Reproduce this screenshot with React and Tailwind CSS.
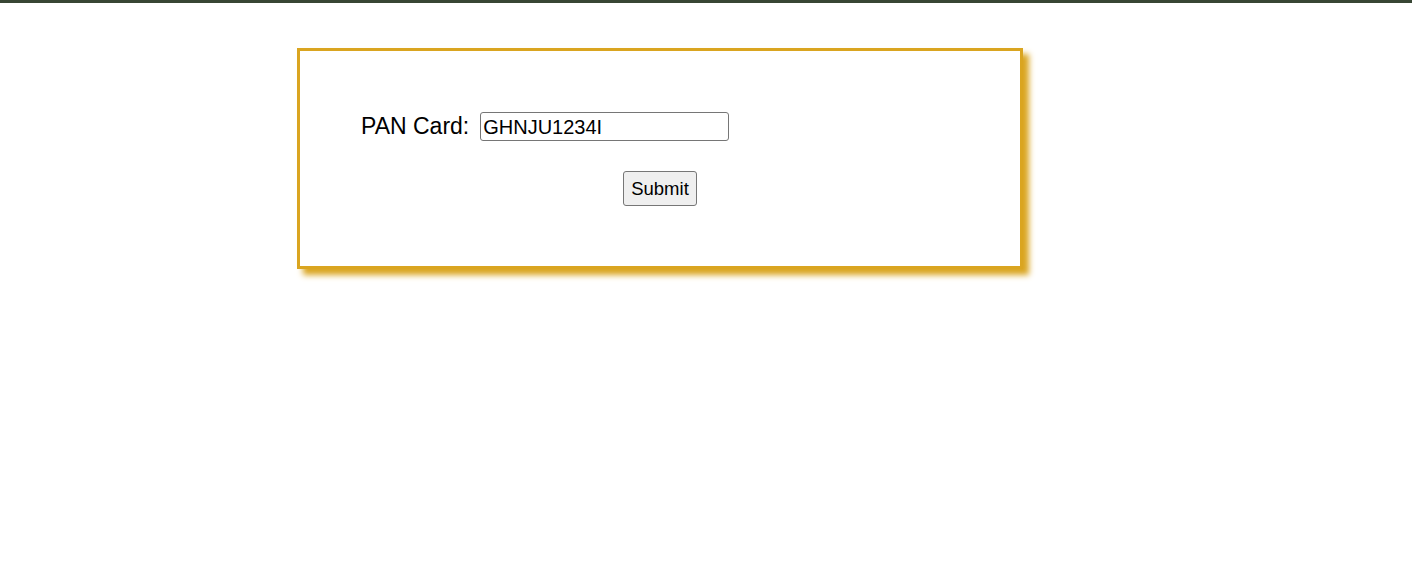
import React, { useState } from "react";

export default function App() {
  const [pan, setPan] = useState("GHNJU1234I");

  return (
    <div className="min-h-screen bg-white font-['Liberation_Sans',Arial,sans-serif] text-black">
      <div className="h-[3px] bg-[#384634]" />
      <div className="ml-[297px] mt-[45px] w-[726px] h-[221px] border-[3px] border-[#DAA520] bg-white shadow-[6px_6px_6px_#DAA520] pt-[61px] pl-[61px]">
        <div className="flex items-center h-[29px]">
          <span className="text-[23px] leading-none">PAN Card:</span>
          <input
            type="text"
            value={pan}
            onChange={(e) => setPan(e.target.value)}
            className="ml-[11px] w-[249px] h-[29px] px-[2px] text-[20px] border border-[#767676] rounded-[3px] outline-none"
          />
        </div>
        <div className="flex justify-center mt-[30px] -ml-[61px]">
          <button
            type="button"
            className="w-[74px] h-[35px] text-[18.5px] bg-[#efefef] border border-[#767676] rounded-[3px]"
          >
            Submit
          </button>
        </div>
      </div>
    </div>
  );
}
